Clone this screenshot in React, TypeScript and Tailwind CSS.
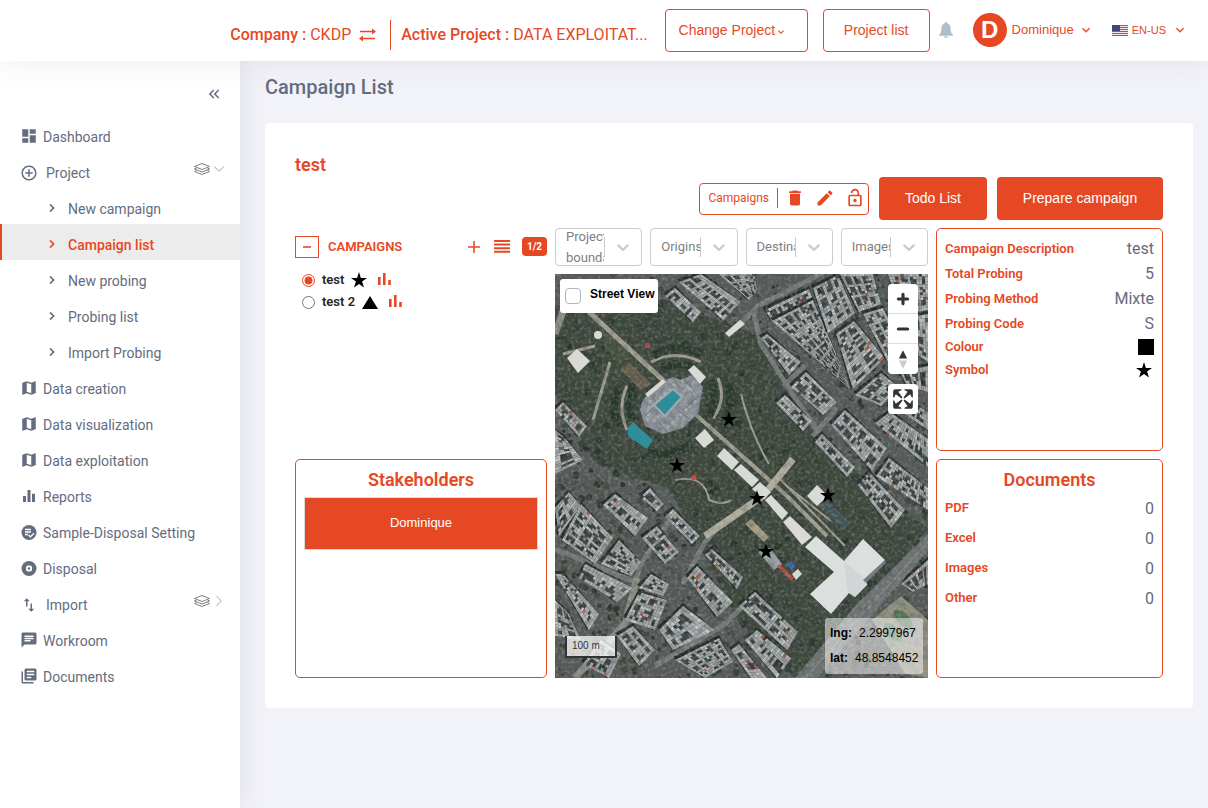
import React, { useState } from 'react';
import {
  MdAddCircleOutline,
  MdChat,
  MdDashboard,
  MdDelete,
  MdEdit,
  MdEqualizer,
  MdImportExport,
  MdKeyboardArrowDown,
  MdKeyboardDoubleArrowLeft,
  MdLibraryBooks,
  MdMap,
  MdOutlineLockOpen,
} from 'react-icons/md';
import { SlArrowDown, SlArrowRight } from 'react-icons/sl';

/* ---------- small icons ---------- */

const StarIcon = ({ className = '' }) => (
  <svg viewBox="0 0 16 16" className={className}>
    <path fill="#000" d="M8 0l1.900 5.900H16l-4.900 3.700 1.900 6L8 12l-5 3.600 1.900-6L0 5.900h6.100z" />
  </svg>
);

const TriangleIcon = ({ className = '' }) => (
  <svg viewBox="0 0 16 13" className={className}>
    <path fill="#000" d="M8 0l8 13H0z" />
  </svg>
);

const SwapIcon = () => (
  <svg viewBox="0 0 17 14" className="h-[14px] w-[17px]" fill="none" stroke="#e64824" strokeWidth="1.300">
    <path d="M1 3.500h14M16 10.500H2" />
    <path fill="#e64824" stroke="none" d="M13 0.500l4 3-4 3zM4 7.500l-4 3 4 3z" />
  </svg>
);

const BellIcon = () => (
  <svg viewBox="0 0 14 16" className="h-4 w-[14px]" fill="#adc0c8">
    <path d="M7 0c.8 0 1.200.6 1.200 1.300C10.600 2 11.600 4 11.600 6.200c0 3.300.6 5 2.400 6.800v.8H0V13c1.800-1.800 2.400-3.500 2.400-6.800C2.400 4 3.400 2 5.800 1.300 5.800.6 6.200 0 7 0zM4.600 14.600h4.800C9 15.600 8 16 7 16s-2-.4-2.400-1.400z" />
  </svg>
);

const FlagIcon = () => (
  <svg viewBox="0 0 16 11" className="h-[11px] w-4">
    <rect width="16" height="11" fill="#f4e6e9" />
    {[0, 2, 4, 6, 8, 10].map((y) => (
      <rect key={y} y={y} width="16" height="1" fill="#d3405c" />
    ))}
    <rect width="8" height="6" fill="#45457e" />
  </svg>
);

const SampleIcon = () => (
  <svg viewBox="0 0 16 16" className="h-4 w-4">
    <circle cx="8" cy="7.500" r="7.500" fill="currentColor" />
    <path fill="none" stroke="#fff" strokeWidth="1.300" d="M4 4.500h6M4 7h6M4 9.500h3M7.500 10l2 1.800 3.700-3.700" />
  </svg>
);

const DisposalIcon = () => (
  <svg viewBox="0 0 16 16" className="h-4 w-4">
    <circle cx="8" cy="7.500" r="7.500" fill="currentColor" />
    <rect x="5" y="4.500" width="6" height="6" rx="2" fill="#fff" />
    <circle cx="8" cy="7.500" r="1.200" fill="currentColor" />
  </svg>
);

const LayersIcon = () => (
  <svg viewBox="0 0 16 12" className="h-3 w-4" fill="none" stroke="#707070" strokeWidth="0.900">
    <path d="M8 0.500l7.500 3-7.500 3-7.500-3zM2.500 5L0.500 6 8 9l7.500-3-2-1M2.500 7.500l-2 1L8 11.500l7.500-3-2-1" />
  </svg>
);

const ChevronIcon = () => (
  <svg viewBox="0 0 6 8" className="mb-[2px] h-2 w-[6px]" fill="none" stroke="currentColor" strokeWidth="1.700">
    <path d="M1 0.500L4.600 4 1 7.500" />
  </svg>
);

const LinesIcon = () => (
  <svg viewBox="0 0 16 13" className="h-[13px] w-4" fill="#e64824">
    <path d="M0 0h16v2H0zM0 3.600h16v2H0zM0 7.200h16v2H0zM0 10.800h16v2H0z" />
  </svg>
);

const BarsIcon = () => (
  <svg viewBox="0 0 13 12" className="h-3 w-[13px]" fill="#e64824">
    <path d="M0 4h2.600v8H0zM5 0h2.600v12H5zM10.200 7h2.600v5h-2.600z" />
  </svg>
);

/* ---------- header ---------- */

const Header = () => (
  <header className="relative z-20 flex h-[61px] items-center justify-end bg-white pb-px pr-5 text-[#e64824] shadow-[0_0_30px_rgba(82,63,105,0.1)]">
    <div className="flex items-center pt-[10px] text-base">
      <p>
        <span className="font-medium">Company : </span>CKDP
      </p>
      <button type="button" aria-label="Change company" className="ml-2">
        <SwapIcon />
      </button>
      <div className="ml-[14px] mr-[10px] h-[30px] w-px bg-[#e64824]" />
      <p>
        <span className="font-medium">Active Project : </span>DATA EXPLOITAT...
      </p>
    </div>
    <div className="ml-[17px] flex items-center gap-[15px] font-['Liberation_Sans',sans-serif] text-sm">
      <button type="button" className="flex h-[43px] w-[143px] items-center rounded border border-[#e64824] pl-[13px]">
        Change Project
        <MdKeyboardArrowDown className="mt-1 h-3 w-3" />
      </button>
      <button type="button" className="h-[43px] w-[107px] rounded border border-[#e64824]">
        Project list
      </button>
    </div>
    <button type="button" aria-label="Notifications" className="ml-[9px]">
      <BellIcon />
    </button>
    <button type="button" className="ml-5 flex items-center font-['Liberation_Sans',sans-serif] text-[13px]">
      <span className="mr-[5px] flex h-[34px] w-[34px] items-center justify-center rounded-full bg-[#e64824] text-2xl font-bold text-white">
        D
      </span>
      Dominique
      <MdKeyboardArrowDown className="ml-1 h-4 w-4" />
    </button>
    <button type="button" className="ml-[18px] flex items-center font-['Liberation_Sans',sans-serif] text-[11px]">
      <FlagIcon />
      <span className="ml-1">EN-US</span>
      <MdKeyboardArrowDown className="ml-[6px] h-4 w-4" />
    </button>
  </header>
);

/* ---------- sidebar ---------- */

const NavItem = ({ icon, label, wide = false, arrow = null }) => (
  <li>
    <a href="#" className="flex h-9 items-center pl-5 pr-4 pt-[5px]">
      <span className="flex w-[18px] justify-center">{icon}</span>
      <span className={wide ? 'ml-2' : 'ml-[5px]'}>{label}</span>
      {arrow && (
        <span className="mb-2 ml-auto flex items-center gap-1 text-gray-400">
          <LayersIcon />
          {arrow}
        </span>
      )}
    </a>
  </li>
);

const SubItem = ({ label, active = false }) => (
  <li>
    <a
      href="#"
      className={`flex h-9 items-center border-l-2 pl-[47px] pt-[5px] ${
        active ? 'border-[#e64824] bg-[#ececec] font-medium text-[#e64824]' : 'border-transparent'
      }`}
    >
      <ChevronIcon />
      <span className="ml-[13px]">{label}</span>
    </a>
  </li>
);

const Sidebar = () => (
  <aside className="z-10 w-60 shrink-0 bg-white text-sm text-[#646c7f] shadow-[0_0_28px_rgba(82,63,105,0.12)]">
    <div className="flex h-[55px] items-end justify-end pb-[13px] pr-[17px]">
      <button type="button" aria-label="Collapse menu">
        <MdKeyboardDoubleArrowLeft className="h-[18px] w-[18px]" />
      </button>
    </div>
    <ul>
      <NavItem icon={<MdDashboard className="mb-[2px] h-[18px] w-[18px]" />} label="Dashboard" />
      <NavItem
        icon={<MdAddCircleOutline className="h-[18px] w-[18px]" />}
        label="Project"
        wide
        arrow={<SlArrowDown className="h-[10px] w-[10px]" />}
      />
      <SubItem label="New campaign" />
      <SubItem label="Campaign list" active />
      <SubItem label="New probing" />
      <SubItem label="Probing list" />
      <SubItem label="Import Probing" />
      <NavItem icon={<MdMap className="mb-[2px] h-[18px] w-[18px]" />} label="Data creation" />
      <NavItem icon={<MdMap className="mb-[2px] h-[18px] w-[18px]" />} label="Data visualization" />
      <NavItem icon={<MdMap className="mb-[2px] h-[18px] w-[18px]" />} label="Data exploitation" />
      <NavItem icon={<MdEqualizer className="mb-[2px] h-[18px] w-[18px]" />} label="Reports" />
      <NavItem icon={<SampleIcon />} label="Sample-Disposal Setting" />
      <NavItem icon={<DisposalIcon />} label="Disposal" />
      <NavItem
        icon={<MdImportExport className="h-[18px] w-[18px]" />}
        label="Import"
        wide
        arrow={<SlArrowRight className="h-[10px] w-[10px]" />}
      />
      <NavItem icon={<MdChat className="mb-[2px] h-[18px] w-[18px]" />} label="Workroom" />
      <NavItem icon={<MdLibraryBooks className="mb-[2px] h-[18px] w-[18px]" />} label="Documents" />
    </ul>
  </aside>
);

/* ---------- satellite map ---------- */

// seeded so the roofs do not change between renders
const makeRandom = (seed) => {
  let s = seed;
  return () => {
    s = (s * 16807) % 2147483647;
    return s / 2147483647;
  };
};

// four corners of each building block: x,y pairs
const blocks = [
  [210, 36, 254, 15, 258, 26, 217, 47],
  [217, 47, 258, 26, 291, 103, 295, 115],
  [258, 14, 283, 1, 300, 39, 273, 59],
  [281, 60, 299, 47, 330, 84, 298, 115],
  [285, 0, 318, 0, 326, 30, 304, 38],
  [308, 40, 328, 34, 350, 76, 333, 88],
  [333, 0, 373, 0, 373, 36, 346, 40],
  [348, 44, 373, 40, 373, 88, 358, 78],
  [206, 64, 212, 60, 246, 88, 234, 101],
  [236, 113, 251, 98, 282, 128, 268, 141],
  [221, 129, 230, 121, 257, 147, 248, 157],
  [276, 151, 290, 136, 332, 174, 317, 197],
  [260, 168, 267, 160, 300, 193, 292, 203],
  [320, 149, 335, 138, 373, 165, 373, 193],
  [338, 132, 350, 124, 373, 138, 373, 156],
  [300, 121, 326, 99, 344, 113, 326, 132],
  [345, 98, 373, 92, 373, 118, 352, 112],
  [124, 8, 146, 0, 186, 28, 168, 46],
  [110, 22, 120, 14, 146, 38, 138, 48],
  [164, 0, 200, 0, 202, 16, 194, 26],
  [0, 136, 8, 128, 32, 152, 24, 163],
  [0, 156, 10, 164, 28, 186, 0, 200],
  [321, 202, 334, 184, 373, 214, 373, 236],
  [303, 211, 314, 198, 350, 236, 336, 254],
  [48, 231, 60, 220, 93, 244, 80, 262],
  [87, 264, 102, 252, 124, 278, 110, 290],
  [85, 223, 95, 214, 109, 230, 102, 237],
  [110, 243, 118, 235, 145, 262, 137, 270],
  [150, 281, 157, 275, 188, 303, 182, 315],
  [132, 304, 142, 292, 178, 328, 162, 343],
  [7, 266, 26, 230, 58, 264, 40, 290],
  [0, 234, 14, 218, 26, 232, 4, 262],
  [46, 290, 64, 266, 86, 288, 76, 302],
  [24, 304, 30, 290, 78, 314, 62, 328],
  [0, 300, 8, 300, 44, 340, 34, 356],
  [0, 326, 14, 340, 26, 366, 0, 362],
  [70, 346, 84, 318, 112, 326, 100, 356],
  [84, 314, 96, 300, 114, 310, 108, 322],
  [104, 356, 128, 332, 160, 356, 118, 376],
  [62, 362, 78, 352, 100, 376, 84, 392],
  [120, 386, 164, 364, 178, 388, 150, 404],
  [184, 332, 200, 318, 243, 358, 232, 376],
  [190, 366, 202, 356, 236, 384, 222, 404],
  [176, 376, 184, 370, 212, 404, 196, 404],
  [346, 310, 373, 286, 373, 310, 358, 318],
  [28, 390, 46, 366, 66, 380, 54, 404],
];

const whiteHalls = [
  '12,84 22,75 35,87 23,99',
  '133,96 139,91 151,103 145,110',
  '140,164 150,155 159,166 149,174',
  '162,182 169,174 184,188 177,196',
  '179,196 186,190 204,206 197,213',
  '197,215 205,208 216,218 209,225',
  '210,226 216,221 233,239 227,246',
  '228,248 235,242 257,263 247,271',
  '252,222 262,211 273,222 262,232',
  '170,59 185,46 190,50 174,63',
  '237,300 243,295 247,300 241,306',
];

const SatelliteView = () => {
  const rnd = makeRandom(4711);
  const cells = [];
  const roofs = ['#abb0b2', '#a0a5a8', '#b4b6b4', '#969c9f', '#a8a69e', '#c4c7c7'];
  const yards = ['#353b3c', '#3e4443', '#494d4a', '#2f3633'];

  blocks.forEach((q, index) => {
    const at = (u, v) => {
      const x = (1 - u) * (1 - v) * q[0] + u * (1 - v) * q[2] + u * v * q[4] + (1 - u) * v * q[6];
      const y = (1 - u) * (1 - v) * q[1] + u * (1 - v) * q[3] + u * v * q[5] + (1 - u) * v * q[7];
      return `${x.toFixed(1)},${y.toFixed(1)}`;
    };
    const nu = Math.max(4, Math.round(Math.hypot(q[2] - q[0], q[3] - q[1]) / 3));
    const nv = Math.max(4, Math.round(Math.hypot(q[6] - q[0], q[7] - q[1]) / 3));
    // shadow that the block throws on the street
    cells.push(
      <polygon
        key={`shadow-${index}`}
        fill="#23292b"
        points={`${q[0] - 2},${q[1] - 3} ${q[2]},${q[3] - 3} ${q[4]},${q[5]} ${q[6] - 2},${q[7]}`}
      />
    );
    for (let i = 0; i < nu; i++) {
      for (let j = 0; j < nv; j++) {
        // courtyards sit in a regular rhythm behind the street fronts
        const inner = i > 0 && j > 0 && i < nu - 1 && j < nv - 1;
        const court = inner && i % 3 !== 0 && j % 4 !== 0;
        const dark = rnd() < (court ? 0.65 : 0.05);
        const list = dark ? yards : roofs;
        let fill = list[Math.floor(rnd() * list.length)];
        if (rnd() < 0.01) fill = '#a8604f';
        cells.push(
          <polygon
            key={`${index}-${i}-${j}`}
            fill={fill}
            points={[
              at(i / nu, j / nv),
              at((i + 1) / nu, j / nv),
              at((i + 1) / nu, (j + 1) / nv),
              at(i / nu, (j + 1) / nv),
            ].join(' ')}
          />
        );
      }
    }
  });

  const trees = Array.from({ length: 1500 }, (_, i) => (
    <circle
      key={i}
      cx={(rnd() * 373).toFixed(1)}
      cy={(rnd() * 404).toFixed(1)}
      r={(1 + rnd() * 2.6).toFixed(1)}
      fill={['#2a332c', '#343e32', '#3d4639', '#484d44', '#2f3833'][Math.floor(rnd() * 5)]}
    />
  ));

  return (
    <svg viewBox="0 0 373 404" preserveAspectRatio="xMidYMid slice" className="absolute inset-0 h-full w-full" aria-hidden="true">
      <defs>
        <filter id="grain" x="0" y="0" width="100%" height="100%">
          <feTurbulence type="fractalNoise" baseFrequency="0.3" numOctaves="3" seed="8" />
          <feColorMatrix values="0 0 0 0 0.6  0 0 0 0 0.61  0 0 0 0 0.57  2 0 0 0 -0.9" />
        </filter>
        <filter id="shade" x="0" y="0" width="100%" height="100%">
          <feTurbulence type="fractalNoise" baseFrequency="0.15" numOctaves="3" seed="21" />
          <feColorMatrix values="0 0 0 0 0.08  0 0 0 0 0.1  0 0 0 0 0.1  0 2 0 0 -0.8" />
        </filter>
        <filter id="soften">
          <feGaussianBlur stdDeviation="0.5" />
        </filter>
      </defs>
      <rect width="373" height="404" fill="#555957" />
      <path fill="#3b453a" d="M0 32L95 20 200 60 262 165 373 255 240 404 185 350 115 215 40 190 0 120z" />
      {trees}

      {/* streets and avenues */}
      <g fill="none" stroke="#757976" strokeWidth="5">
        <path d="M183 52L203 32 273 -4" />
        <path stroke="#555a57" d="M203 34L290 125 333 169 373 205M256 16L300 122 346 84" />
        <path d="M0 205L40 214 82 268 142 318 215 404" stroke="#4a504d" />
        <path d="M0 275L80 308 86 290 120 238" />
        <path d="M82 304L70 350 20 404" strokeWidth="7" stroke="#8d8b83" />
        <path d="M100 392L170 350 190 330" />
        <path d="M128 310L150 268 166 250" />
        <path d="M228 112L250 92M258 162L282 134M198 36L206 70 236 118 262 156" stroke="#747876" />
        <path d="M300 125L346 95" stroke="#666b69" />
        <path d="M0 60L14 20 30 10" strokeWidth="7" stroke="#8c8b83" />
      </g>

      {/* park paths */}
      <g fill="none" stroke="#a09d90">
        <path strokeWidth="5" d="M34 38L110 108" />
        <path strokeWidth="3" d="M60 84L74 76M55 88L38 146M8 80L40 72" />
        <path strokeWidth="3" d="M96 88Q120 75 146 88M72 112Q62 132 72 156M163 104Q172 126 158 144" />
        <path strokeWidth="4" d="M140 140L232 222 272 262" />
        <path strokeWidth="7" stroke="#b1ae9e" d="M150 262L208 222 238 185" />
        <path strokeWidth="2" d="M120 206Q150 200 154 226 168 232 176 226M186 120Q196 160 214 190" />
        <path strokeWidth="2" d="M225 205L290 272M232 212L276 247" />
      </g>
      <g fill="none" stroke="#27352a" strokeWidth="8">
        <path d="M98 82Q122 67 146 80M106 94Q124 86 138 94" />
        <path d="M64 112Q54 132 64 154M80 116Q72 130 76 144M155 106Q164 124 154 142M172 106Q182 132 166 152" />
        <path d="M92 178Q112 186 136 170" />
      </g>
      <path fill="#434f3c" d="M45 66L54 60 76 80 64 92z" />
      <path fill="#655c4b" d="M66 96l8-8 22 22-10 6z" />

      <g filter="url(#soften)">{cells}</g>

      {/* fountain plaza */}
      <path fill="#8c9298" d="M85 136L87 128 95 116 110 106 118 103 126 106 137 101 148 113 143 139 128 154 108 160 90 152z" />
      <g stroke="#a9aeb4" strokeWidth="3" strokeDasharray="4 2">
        <path d="M92 138L120 110M98 148L140 107M112 154L142 126M96 120L92 148M126 106L142 120" />
      </g>
      <g fill="none" stroke="#6b727a" strokeWidth="1">
        <path d="M90 142L104 128M94 120l12 14M118 104l6 10M130 106l12 14M144 122l-16 14M136 146l-14-10M104 148l8 10" />
      </g>

      {/* avenue crossing the lower right */}
      <path fill="#6e7273" d="M373 260V277L262 404H240L300 332z" />
      <path stroke="#8e9292" strokeWidth="1" d="M373 268L250 404" />

      <path fill="#3f5557" d="M265 233L272 226 295 248 290 256z" />

      {/* sports ground */}
      <path fill="#8f8e80" d="M317 346L346 322 373 346 373 404 350 400z" />
      <ellipse cx="348" cy="345" rx="6" ry="12" transform="rotate(-45 348 345)" fill="#4f7350" />
      <ellipse cx="338" cy="358" rx="6" ry="12" transform="rotate(-45 338 358)" fill="#4f7350" />

      {/* small roofs in the park */}
      <path fill="#9a9fa4" d="M203 278l12-4 12 16-8 6z" />
      <path fill="#36659c" d="M231 290l5-3 5 5-5 4z" />
      <path fill="#b9493f" d="M222 292l3-2 14 14-3 3zM90 69h5v5h-5zM136 202l4-2 2 5-5 2z" />
      <path fill="#a89f83" d="M190 250l6-5 18 18-5 5z" />

      <rect width="373" height="404" filter="url(#grain)" opacity="0.4" />
      <rect width="373" height="404" filter="url(#shade)" opacity="0.45" />

      {/* pools and bright roofs stay clear of the grain */}
      <path fill="#2f8c99" stroke="#a4a9ad" strokeWidth="2" d="M99 131L118 115 127 123 110 142z" />
      <path fill="#318d99" d="M73 154L78 148 98 166 92 175 73 162z" />
      <path fill="#d7d8d5" d="M90 120l18-15 3 3-18 15z" />
      <g fill="#d9dad6">
        {whiteHalls.map((points) => (
          <polygon key={points} points={points} />
        ))}
        <circle cx="43" cy="61" r="4" />
      </g>
      <path fill="#dddfdf" d="M250 273L261 262 289 287 308 265 330 286 311 305 312 311 300 323 294 319 276 340 255 320 279 298z" />
      <path fill="#d2d5d6" d="M289 287l20 17 2 7-11 12-8-8z" />
      <path fill="#727c86" d="M308 306l22-20 1 3-20 20z" />
    </svg>
  );
};

// map markers, as a share of the map's size
const markers = [
  { left: '46.6%', top: '36%' },
  { left: '32.7%', top: '47.2%' },
  { left: '54.2%', top: '55.4%' },
  { left: '73.2%', top: '54.8%' },
  { left: '56.6%', top: '68.5%' },
];

const MapView = () => {
  const [street, setStreet] = useState(false);

  return (
    <div className="relative flex-1 overflow-hidden font-['Liberation_Sans',sans-serif] text-xs text-black">
      <SatelliteView />
      {markers.map((marker) => (
        <span key={marker.left} className="absolute -translate-x-1/2 -translate-y-1/2" style={marker}>
          <StarIcon className="h-4 w-4" />
        </span>
      ))}

      <label className="absolute left-[5px] top-[5px] flex h-[34px] w-[98px] rounded-[3px] bg-white pl-[5px] pt-[9px] font-bold leading-3">
        <input
          type="checkbox"
          checked={street}
          onChange={() => setStreet(!street)}
          className="h-4 w-4 shrink-0 appearance-none rounded border border-[#adb5bd] checked:bg-[#e64824]"
        />
        <span className="ml-[9px] whitespace-nowrap">Street View</span>
      </label>

      <div className="absolute right-[10px] top-[10px] flex w-[30px] flex-col gap-[10px]">
        <div className="divide-y divide-[#ddd] overflow-hidden rounded bg-white">
          <button type="button" aria-label="Zoom in" className="block h-[30px] w-full">
            <svg viewBox="0 0 29 29" fill="#333">
              <path d="M14.500 8.500c-.75 0-1.500.75-1.500 1.500v3h-3c-.75 0-1.500.75-1.500 1.500S9.250 16 10 16h3v3c0 .75.75 1.500 1.500 1.500S16 19.750 16 19v-3h3c.75 0 1.500-.75 1.500-1.500S19.750 13 19 13h-3v-3c0-.75-.75-1.500-1.500-1.500z" />
            </svg>
          </button>
          <button type="button" aria-label="Zoom out" className="block h-[30px] w-full">
            <svg viewBox="0 0 29 29" fill="#333">
              <path d="M10 13c-.75 0-1.500.75-1.500 1.500S9.250 16 10 16h9c.75 0 1.500-.75 1.500-1.500S19.750 13 19 13h-9z" />
            </svg>
          </button>
          <button type="button" aria-label="Reset north" className="block h-[30px] w-full">
            <svg viewBox="0 0 29 29">
              <path fill="#333" d="M10.500 14l4-8 4 8h-8z" />
              <path fill="#ccc" d="M10.500 16l4 8 4-8h-8z" />
            </svg>
          </button>
        </div>
        <button type="button" aria-label="Full screen" className="h-[30px] w-[30px] rounded bg-white">
          <svg viewBox="0 0 29 29" fill="#333">
            <path d="M24 16v5.500c0 1.750-.75 2.500-2.500 2.500H16v-1l3-1.500-4-5.500 1-1 5.500 4 1.500-3h1zM6 16l1.500 3 5.500-4 1 1-4 5.500 3 1.500v1H7.500C5.750 24 5 23.250 5 21.500V16h1zm7-11v1l-3 1.500 4 5.500-1 1-5.500-4L6 13H5V7.500C5 5.750 5.750 5 7.500 5H13zm11 2.500c0-1.750-.75-2.500-2.500-2.500H16v1l3 1.500-4 5.500 1 1 5.500-4 1.500 3h1V7.500z" />
          </svg>
        </button>
      </div>

      <div className="absolute bottom-5 left-[10px] h-[22px] w-[52px] border-2 border-t-0 border-[#333] bg-white/75 pl-[5px] text-[10px] leading-5 text-[#333]">
        100 m
      </div>
      <div className="absolute bottom-1 right-[5px] w-[98px] rounded-[3px] bg-white/50 px-[5px] py-[3px] leading-[25px]">
        <p className="whitespace-nowrap">
          <b>lng:</b>
          <span className="ml-[7px]">2.2997967</span>
        </p>
        <p className="whitespace-nowrap">
          <b>lat:</b>
          <span className="ml-[7px]">48.8548452</span>
        </p>
      </div>
    </div>
  );
};

/* ---------- campaign page ---------- */

const FilterSelect = ({ label }) => (
  <div className="relative flex h-[38px] min-w-0 flex-1 items-center overflow-hidden rounded border border-[#ccc] pb-px pl-[10px] text-[13px] leading-[21px] text-[#808080]">
    <span aria-hidden="true" className="min-w-0 flex-1 overflow-hidden">
      {label}
    </span>
    <span className="h-5 w-px shrink-0 bg-[#ccc]" />
    <svg viewBox="0 0 20 20" className="mx-2 h-5 w-5 shrink-0" fill="#ccc">
      <path d="M4.516 7.548c0.436-0.446 1.043-0.481 1.576 0l3.908 3.747 3.908-3.747c0.533-0.481 1.141-0.446 1.574 0 0.436 0.445 0.408 1.197 0 1.615-0.406 0.418-4.695 4.502-4.695 4.502-0.217 0.223-0.502 0.335-0.787 0.335s-0.570-0.112-0.789-0.335c0 0-4.287-4.084-4.695-4.502s-0.436-1.170 0-1.615z" />
    </svg>
    <select aria-label={label} className="absolute inset-0 h-full w-full cursor-pointer opacity-0">
      <option>{label}</option>
    </select>
  </div>
);

const campaigns = [
  { name: 'test', symbol: <StarIcon className="h-4 w-4" /> },
  { name: 'test 2', symbol: <TriangleIcon className="h-[13px] w-4" /> },
];

const CampaignPicker = () => {
  const [selected, setSelected] = useState('test');

  return (
    <div className="h-[223px]">
      <div className="flex items-center pt-2">
        <button
          type="button"
          aria-label="Collapse campaigns"
          className="flex h-[22px] w-6 items-center justify-center border border-[#e64824]"
        >
          <span className="h-[2px] w-2 bg-[#e64824]/80" />
        </button>
        <h3 className="ml-[9px] pb-px text-[13px] font-semibold text-[#e64824]">CAMPAIGNS</h3>
        <div className="ml-auto flex items-center pb-px">
          <button type="button" aria-label="Add campaign">
            <svg viewBox="0 0 12 12" className="h-3 w-3" stroke="#e64824" strokeWidth="1.600">
              <path d="M6 0v12M0 6h12" />
            </svg>
          </button>
          <button type="button" aria-label="Show all" className="ml-[14px]">
            <LinesIcon />
          </button>
          <span className="ml-3 flex h-[19px] w-[25px] items-center justify-center rounded bg-[#e64824] text-[10px] font-bold text-white">
            1/2
          </span>
        </div>
      </div>
      <div className="pl-[7px] pt-[11px]">
        {campaigns.map((campaign) => (
          <div key={campaign.name} className="flex h-[22px] items-center">
            <label className="flex items-center gap-[7px] text-[13px] font-semibold text-[#212529]">
              <input
                type="radio"
                name="campaign"
                checked={selected === campaign.name}
                onChange={() => setSelected(campaign.name)}
                className="h-[13px] w-[13px] accent-[#e64824]"
              />
              {campaign.name}
              {campaign.symbol}
            </label>
            <span className="mb-[2px] ml-[11px]">
              <BarsIcon />
            </span>
          </div>
        ))}
      </div>
    </div>
  );
};

const details = [
  ['Campaign Description', 'test'],
  ['Total Probing', '5'],
  ['Probing Method', 'Mixte'],
  ['Probing Code', 'S'],
];

const documents = [
  ['PDF', '0'],
  ['Excel', '0'],
  ['Images', '0'],
  ['Other', '0'],
];

const CampaignDetails = () => (
  <section className="h-[223px] rounded-[5px] border border-[#e64824] px-2 pt-[7px] text-[13px] font-semibold text-[#e64824]">
    {details.map(([label, value]) => (
      <div key={label} className="flex h-[25px] items-center justify-between">
        <span>{label}</span>
        <span className="text-base font-normal text-[#646c7f]">{value}</span>
      </div>
    ))}
    <div className="flex h-[22px] items-center justify-between">
      <span>Colour</span>
      <span className="h-4 w-4 bg-black" />
    </div>
    <div className="flex h-6 items-center justify-between">
      <span>Symbol</span>
      <StarIcon className="mr-[2px] h-4 w-4" />
    </div>
  </section>
);

const DocumentsPanel = () => (
  <section className="h-[219px] rounded-[5px] border border-[#e64824] px-2 pt-[6px]">
    <h3 className="text-center text-lg leading-7 font-semibold text-[#e64824]">Documents</h3>
    {documents.map(([label, value]) => (
      <div key={label} className="flex h-[30px] items-center justify-between">
        <span className="pb-[3px] text-[13px] font-semibold text-[#e64824]">{label}</span>
        <span className="text-base text-[#646c7f]">{value}</span>
      </div>
    ))}
  </section>
);

const StakeholdersPanel = () => (
  <section className="h-[219px] rounded-[5px] border border-[#e64824] px-2 pt-[6px]">
    <h3 className="text-center text-lg leading-7 font-semibold text-[#e64824]">Stakeholders</h3>
    <button
      type="button"
      className="mt-[3px] h-[53px] w-full border border-[#d9d9d9] bg-[#e64824] pb-px font-['Liberation_Sans',sans-serif] text-[13px] text-white"
    >
      Dominique
    </button>
  </section>
);

const CampaignCard = () => (
  <section className="mt-[23px] rounded bg-white p-[30px]">
    <h2 className="text-lg leading-6 font-semibold text-[#e64824]">test</h2>
    <div className="flex items-center justify-end gap-[10px] font-['Liberation_Sans',sans-serif] text-sm text-white">
      <div className="flex h-8 items-center rounded border border-[#e64824] pb-px pl-2 pr-[3px] font-[Roboto,sans-serif] text-xs text-[#e64824]">
        Campaigns
        <span className="ml-2 mr-[7px] h-5 w-px bg-[#e64824]" />
        <div className="flex items-center gap-[10px]">
          <button type="button" aria-label="Delete">
            <MdDelete className="h-5 w-5" />
          </button>
          <button type="button" aria-label="Edit">
            <MdEdit className="h-5 w-5" />
          </button>
          <button type="button" aria-label="Unlock">
            <MdOutlineLockOpen className="h-5 w-5" />
          </button>
        </div>
      </div>
      <button type="button" className="h-[43px] w-[108px] rounded bg-[#e64824] pb-px">
        Todo List
      </button>
      <button type="button" className="h-[43px] w-[166px] rounded bg-[#e64824] pb-px">
        Prepare campaign
      </button>
    </div>

    <div className="mt-2 grid grid-cols-[minmax(0,252fr)_minmax(0,373fr)_minmax(0,227fr)] gap-2">
      <div className="flex flex-col gap-2">
        <CampaignPicker />
        <StakeholdersPanel />
      </div>
      <div className="flex flex-col gap-2">
        <div className="flex gap-2">
          <FilterSelect label="Project boundaries" />
          <FilterSelect label="Origins" />
          <FilterSelect label="Destinations" />
          <FilterSelect label="Images" />
        </div>
        <MapView />
      </div>
      <div className="flex flex-col gap-2">
        <CampaignDetails />
        <DocumentsPanel />
      </div>
    </div>
  </section>
);

export default function App() {
  return (
    <div className="flex min-h-screen flex-col bg-[#f2f3f8] font-[Roboto,sans-serif]">
      <Header />
      <div className="flex flex-1">
        <Sidebar />
        <main className="min-w-0 flex-1 pb-6 pl-[25px] pr-[15px] pt-[13px]">
          <h1 className="text-xl leading-[26px] font-medium text-[#646c7f]">Campaign List</h1>
          <CampaignCard />
        </main>
      </div>
    </div>
  );
}
